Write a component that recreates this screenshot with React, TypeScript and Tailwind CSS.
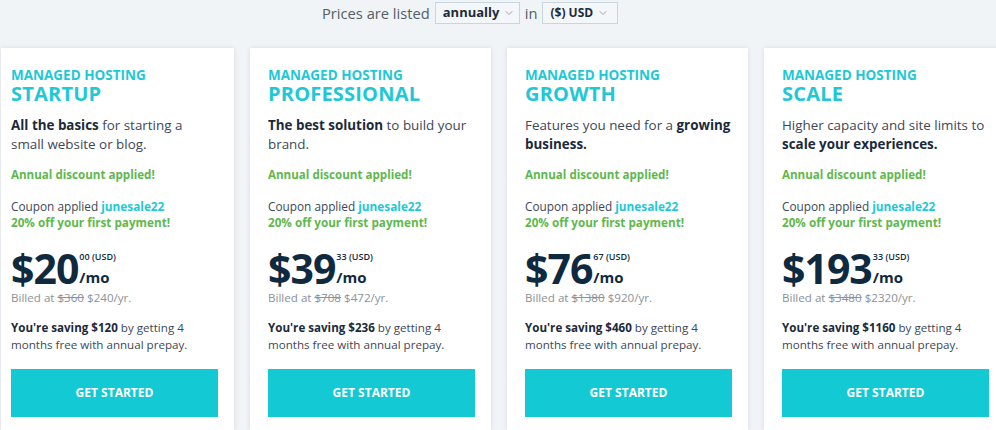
import { ChevronDown } from "lucide-react"

type Plan = {
  name: string
  desc: React.ReactNode
  dollars: string
  cents: string
  was: string
  now: string
  saving: string
}

const plans: Plan[] = [
  {
    name: "STARTUP",
    desc: (
      <>
        <b className="font-bold text-[#1b2a3a]">All the basics</b> for starting a<br />
        small website or blog.
      </>
    ),
    dollars: "20",
    cents: "00",
    was: "$360",
    now: "$240",
    saving: "$120",
  },
  {
    name: "PROFESSIONAL",
    desc: (
      <>
        <b className="font-bold text-[#1b2a3a]">The best solution</b> to build your
        <br />
        brand.
      </>
    ),
    dollars: "39",
    cents: "33",
    was: "$708",
    now: "$472",
    saving: "$236",
  },
  {
    name: "GROWTH",
    desc: (
      <>
        Features you need for a <b className="font-bold text-[#1b2a3a]">growing</b>
        <br />
        <b className="font-bold text-[#1b2a3a]">business.</b>
      </>
    ),
    dollars: "76",
    cents: "67",
    was: "$1380",
    now: "$920",
    saving: "$460",
  },
  {
    name: "SCALE",
    desc: (
      <>
        Higher capacity and site limits to
        <br />
        <b className="font-bold text-[#1b2a3a]">scale your experiences.</b>
      </>
    ),
    dollars: "193",
    cents: "33",
    was: "$3480",
    now: "$2320",
    saving: "$1160",
  },
]

function PlanCard({ plan, first }: { plan: Plan; first?: boolean }) {
  return (
    <div
      className={
        first
          ? "w-[233px] shrink-0 bg-white pl-[10px] pt-[19px] pr-[10px] shadow-[0_0_5px_rgba(30,50,70,0.12)]"
          : "w-[241px] shrink-0 bg-white pl-[18px] pt-[19px] pr-[10px] shadow-[0_0_5px_rgba(30,50,70,0.12)]"
      }
    >
      <div className="text-[13.5px] font-bold leading-[16px] text-[#1ec8d6]">MANAGED HOSTING</div>
      <div className="text-[20px] font-bold leading-[22px] tracking-[0.2px] text-[#1ec8d6]">{plan.name}</div>

      <p className="mt-[11px] whitespace-nowrap text-[13.4px] leading-[19px] text-[#3c4858]">{plan.desc}</p>

      <div className="mt-[12px] text-[11.6px] font-bold leading-[18px] text-[#5fb84e]">Annual discount applied!</div>

      <div className="mt-[14px] text-[11.8px] leading-[16px] text-[#3c4858]">
        Coupon applied <span className="font-bold text-[#1ec8d6]">junesale22</span>
      </div>
      <div className="text-[11.7px] font-bold leading-[16px] text-[#5fb84e]">20% off your first payment!</div>

      <div className="mt-[18px] flex items-start text-[#0f2a3f]">
        <span className="text-[41px] font-bold leading-[40px] tracking-[-1px]">${plan.dollars}</span>
        <div className="ml-[1px] flex flex-col">
          <span className="mt-[3px] text-[9px] font-semibold leading-[12px]">{plan.cents} (USD)</span>
          <span className="mt-[5px] text-[15px] font-bold leading-[18px]">/mo</span>
        </div>
      </div>
      <div className="mt-[2px] text-[11.6px] leading-[16px] text-[#8a929b]">
        Billed at <span className="line-through">{plan.was}</span> {plan.now}/yr.
      </div>

      <p className="mt-[13px] text-[11.6px] leading-[17px] text-[#3c4858]">
        <b className="font-bold text-[#1b2a3a]">You're saving {plan.saving}</b> by getting 4
        <br />
        months free with annual prepay.
      </p>

      <button className="mt-[16px] flex h-[48px] w-[207px] items-center justify-center bg-[#12c9d4] text-[12px] font-bold text-white">
        GET STARTED
      </button>
    </div>
  )
}

export default function App() {
  return (
    <div className="flex h-[430px] w-[996px] flex-col overflow-hidden bg-[#f1f4f7] font-['Open_Sans',sans-serif]">
      <div className="flex h-[48px] shrink-0 items-start pt-[2px] pl-[322px]">
        <span className="mt-[1px] text-[14.7px] leading-[20px] text-[#555d66]">Prices are listed</span>
        <div className="ml-[5px] flex h-[22px] w-[85px] items-center justify-between border border-[#c9d6e0] bg-[#f4f7fa] pl-[7px] pr-[4px]">
          <span className="text-[13px] font-bold text-[#1e2b38]">annually</span>
          <ChevronDown className="h-[12px] w-[12px] text-[#9aa3ab]" strokeWidth={2} />
        </div>
        <span className="mx-[5px] mt-[1px] text-[14.7px] leading-[20px] text-[#555d66]">in</span>
        <div className="flex h-[22px] w-[76px] items-center justify-between border border-[#c9d6e0] bg-[#f4f7fa] pl-[7px] pr-[8px]">
          <span className="text-[12px] font-bold text-[#1e2b38]">($) USD</span>
          <ChevronDown className="h-[12px] w-[12px] text-[#9aa3ab]" strokeWidth={2} />
        </div>
      </div>
      <div className="ml-[1px] flex flex-1 gap-[16px]">
        {plans.map((p, i) => (
          <PlanCard key={p.name} plan={p} first={i === 0} />
        ))}
      </div>
    </div>
  )
}
